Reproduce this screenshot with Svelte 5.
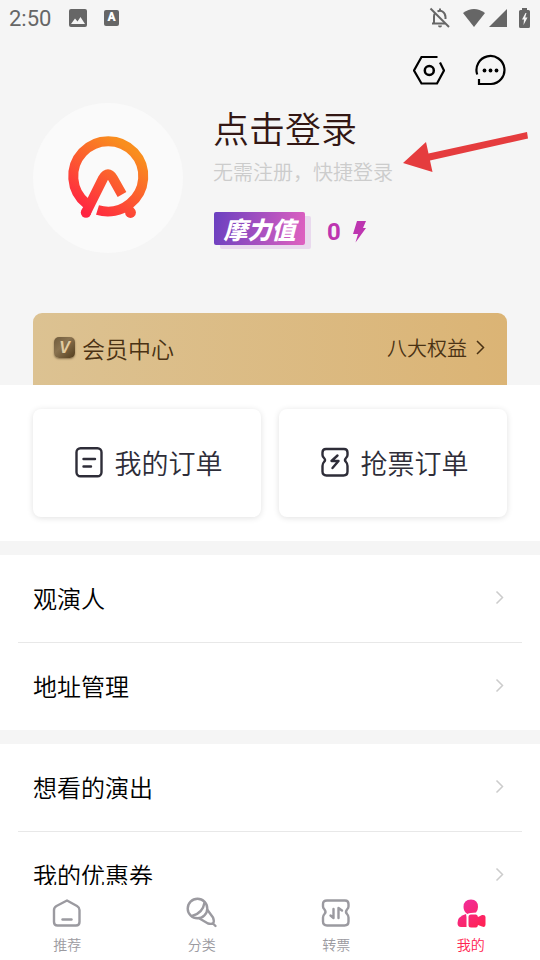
<script>
  const orders = [
    { label: '我的订单', icon: 'list' },
    { label: '抢票订单', icon: 'grab' }
  ];

  const groups = [
    ['观演人', '地址管理'],
    ['想看的演出', '我的优惠券']
  ];

  const tabs = [
    { label: '推荐', icon: 'home' },
    { label: '分类', icon: 'mic' },
    { label: '转票', icon: 'ticket' },
    { label: '我的', icon: 'user' }
  ];

  let active = $state('user');
</script>

<div class="screen">
  <main>
    <section class="hero">
      <div class="status">
        <span class="time">2:50</span>
        <svg class="photo" width="18" height="18" viewBox="0 0 18 18">
          <rect width="18" height="18" rx="2" fill="#666" />
          <path d="M2 15L6 9.500L8.500 12.500L11.500 8L16 15Z" fill="#f5f5f5" />
        </svg>
        <span class="letter">A</span>
        <span class="spacer"></span>
        <svg width="22" height="22" viewBox="0 0 22 22" fill="none" stroke="#666" stroke-width="2">
          <path d="M5 16V9.500Q5 7.500 6 6.500M8.500 4.500Q11 3 13.500 4.500Q16.500 6.500 16.500 10V12M3 16.500H16M11 1.500V4" />
          <path d="M9 18.500H13Q13 20.500 11 20.500Q9 20.500 9 18.500Z" fill="#666" stroke="none" />
          <path d="M1.500 1.500L20 20" />
        </svg>
        <svg class="wifi" width="22" height="18" viewBox="0 0 22 18">
          <path d="M0 4Q11 -4 22 4L11 18Z" fill="#666" />
        </svg>
        <svg class="signal" width="18" height="18" viewBox="0 0 18 18">
          <path d="M18 0V18H0Z" fill="#666" />
        </svg>
        <svg width="11" height="20" viewBox="0 0 11 20">
          <path d="M3 2V0H8V2H9.500Q11 2 11 3.500V18.500Q11 20 9.500 20H1.500Q0 20 0 18.500V3.500Q0 2 1.500 2Z" fill="#666" />
          <path d="M6.500 5L3 11.500H5L4.500 17L8.500 9.500H6.200L7.500 5Z" fill="#f5f5f5" />
        </svg>
      </div>

      <div class="actions">
        <button aria-label="设置">
          <svg width="32" height="32" viewBox="0 0 32 32" fill="none" stroke="#000" stroke-width="2.200">
            <path d="M24.500 3H8.500L1 16.500L8.500 29.500H24L31 16.500L27 8.500" />
            <circle cx="16.300" cy="16.500" r="4.500" stroke-width="2.500" />
          </svg>
        </button>
        <button aria-label="消息">
          <svg width="32" height="32" viewBox="0 0 32 32" fill="none" stroke="#000" stroke-width="2.200">
            <path d="M3.200 20.500A14 14 0 1 1 17 30H5V25" />
            <circle cx="10.500" cy="16.500" r="1.900" fill="#000" stroke="none" />
            <circle cx="16.500" cy="16.500" r="1.900" fill="#000" stroke="none" />
            <circle cx="22.500" cy="16.500" r="1.900" fill="#000" stroke="none" />
          </svg>
        </button>
      </div>

      <div class="profile">
        <div class="avatar">
          <svg width="84" height="84" viewBox="0 0 84 84" fill="none" stroke="url(#flame)" stroke-width="10">
            <defs>
              <linearGradient id="flame" gradientUnits="userSpaceOnUse" x1="20" y1="78" x2="66" y2="14">
                <stop offset="0" stop-color="#ff2442" />
                <stop offset="1" stop-color="#f98e1e" />
              </linearGradient>
            </defs>
            <path d="M20.500 67.600A35 35 0 1 1 64 67.600A35 35 0 0 1 31.500 74" />
            <path d="M20 76.500L37 42.500Q42 34 47 42.500L56 58.500" />
            <circle cx="20" cy="76.500" r="5.200" fill="url(#flame)" stroke="none" />
            <circle cx="64.500" cy="76.500" r="5.400" fill="url(#flame)" stroke="none" />
            <path d="M64.500 76L61 69" stroke-width="9" />
          </svg>
        </div>
        <div class="info">
          <a class="login" href="#login">点击登录</a>
          <p class="hint">无需注册，快捷登录</p>
          <div class="points">
            <span class="badge">摩力值</span>
            <span class="count">0</span>
            <svg width="14" height="22" viewBox="0 0 14 22">
              <path d="M4 0H13L10 7H13L2.500 21.500L5 13H0Z" fill="#bd35b0" />
            </svg>
          </div>
        </div>
        <svg class="arrow" width="126" height="42" viewBox="0 0 126 42">
          <path d="M0 31L23 10L25.500 21.500L124 0L125 6.500L27 28.500L29.500 40Z" fill="#e53c3e" />
        </svg>
      </div>

      <a class="member" href="#member">
        <span class="vip">V</span>
        <span class="member-name">会员中心</span>
        <span class="member-more">八大权益</span>
        <svg width="9" height="15" viewBox="0 0 9 15" fill="none" stroke="#4a3214" stroke-width="1.500">
          <path d="M1 1L7.500 7.500L1 14" />
        </svg>
      </a>
    </section>

    <section class="orders">
      {#each orders as order}
        <button class="order">
          <svg width="28" height="32" viewBox="1 0 28 32" fill="none" stroke="#2e2d38" stroke-width="2.400" stroke-linecap="round" stroke-linejoin="round">
            {#if order.icon === 'list'}
              <rect x="2.500" y="2.200" width="25" height="28" rx="4" />
              <path d="M9.500 13H21M9.500 20.500H17" />
            {:else}
              <path d="M6 3H24Q27.500 3 27.500 6.500V9Q27.500 10.500 26 12Q24 14 26 16Q27.500 17.500 27.500 20V25.500Q27.500 29.500 23.500 29.500H6.500Q2.500 29.500 2.500 25.500V20Q2.500 17.500 4 16Q6 14 4 12Q2.500 10.500 2.500 9V6.500Q2.500 3 6 3Z" />
              <path d="M17.500 9.500L11.500 15H18.500L12.500 22" />
            {/if}
          </svg>
          {order.label}
        </button>
      {/each}
    </section>

    {#each groups as group}
      <ul class="group">
        {#each group as item}
          <li>
            <a href="#{item}">
              {item}
              <svg width="9" height="15" viewBox="0 0 9 15" fill="none" stroke="#ccc" stroke-width="1.500">
                <path d="M1.500 1.500L7.500 7.500L1.500 13.500" />
              </svg>
            </a>
          </li>
        {/each}
      </ul>
    {/each}
  </main>

  <nav>
    {#each tabs as tab}
      <button class="tab" class:active={active === tab.icon} onclick={() => active = tab.icon}>
        <svg width="32" height="32" viewBox="0 0 32 32" fill="none" stroke="currentColor" stroke-width="2.400" stroke-linecap="round" stroke-linejoin="round">
          {#if tab.icon === 'home'}
            <path d="M16 3.500L26 9Q28.500 10.500 28.500 13V25Q28.500 28.500 25 28.500H6.500Q3 28.500 3 25V13Q3 10.500 5.500 9Z" />
            <path d="M11.500 22.500H20.500" />
          {:else if tab.icon === 'mic'}
            <circle cx="11.500" cy="11.500" r="9.800" />
            <path d="M18.500 5.500Q17 16 6 19M21.500 13L27 20.500Q30 28.500 22 26.500L13.500 21.500M27 26.500L29.500 29" />
          {:else if tab.icon === 'ticket'}
            <path d="M7 3.500H25Q28.500 3.500 28.500 7V9.500Q28.500 11 27 12.500Q25 15 27 17Q28.500 18.500 28.500 20.500V24.500Q28.500 28.500 24.500 28.500H7Q3 28.500 3 24.500V20.500Q3 18.500 4.500 17Q6.500 15 4.500 12.500Q3 11 3 9.500V7Q3 3.500 7 3.500Z" />
            <path d="M13.500 12V21L10.500 18.500M18.500 21V11L22 13.500" />
          {:else}
            <defs>
              <linearGradient id="pink" gradientUnits="userSpaceOnUse" x1="9" y1="3" x2="26" y2="28">
                <stop offset="0" stop-color="#f12c9a" />
                <stop offset="1" stop-color="#ff2256" />
              </linearGradient>
            </defs>
            <g fill="url(#pink)" stroke="none">
              <path d="M8.500 10Q8.500 2.500 16 2.500Q23 2.500 23 10Q23 13 21 15.500Q15 15.500 12.500 17Q8.500 14.500 8.500 10Z" />
              <path d="M11 17Q2.500 19.500 2.500 26Q2.500 30 6 30H11.500V20Z" />
              <path d="M16 17.500H21Q22.500 17.500 23 20L27 18Q30.500 17.500 30.500 20V27.500Q30.500 31 27 29.500L23 28Q22.500 30.500 21 30.500H16Q13.500 30.500 13.500 28V20Q13.500 17.500 16 17.500Z" />
            </g>
          {/if}
        </svg>
        <span>{tab.label}</span>
      </button>
    {/each}
  </nav>
</div>

<style>
  :global(body) {
    margin: 0;
  }

  .screen {
    height: 100vh;
    display: flex;
    flex-direction: column;
    background: #fff;
    font-family: "Noto Sans CJK SC", sans-serif;
    font-weight: 350;
  }

  main {
    flex: 1;
    min-height: 0;
    overflow: hidden;
  }

  button {
    padding: 0;
    border: 0;
    background: none;
    font: inherit;
    cursor: pointer;
  }

  a {
    color: inherit;
    text-decoration: none;
  }

  svg {
    display: block;
    flex-shrink: 0;
  }

  .hero {
    padding: 0 33px;
    background: #f5f5f5;
  }

  .status {
    display: flex;
    align-items: center;
    height: 36px;
    margin: 0 -24px;
    padding-right: 1px;
    font-family: Roboto, sans-serif;
  }

  .time {
    width: 60px;
    font-size: 22px;
    font-weight: 400;
    color: #666;
  }

  .letter {
    width: 15px;
    height: 16px;
    margin-left: 17px;
    border-radius: 2px;
    background: #666;
    color: #fff;
    font-size: 12px;
    font-weight: 900;
    line-height: 15px;
    text-align: center;
  }

  .spacer {
    flex: 1;
  }

  .wifi {
    margin-left: 12px;
  }

  .signal {
    margin: 0 12px 0 4px;
  }

  .actions {
    display: flex;
    justify-content: flex-end;
    gap: 29px;
    margin-top: 18px;
    padding-right: 1px;
  }

  .profile {
    position: relative;
    display: flex;
    gap: 30px;
    margin-top: 17px;
  }

  .avatar {
    display: flex;
    align-items: center;
    justify-content: center;
    width: 150px;
    height: 150px;
    border-radius: 50%;
    background: #fafafa;
  }

  .login {
    display: block;
    font-size: 36px;
    line-height: 48px;
    color: #331714;
  }

  .hint {
    margin: 6px 0 0;
    font-size: 20px;
    line-height: 30px;
    color: #ccc;
  }

  .points {
    display: flex;
    align-items: center;
    gap: 18px;
    margin-top: 24px;
  }

  .badge {
    width: 91px;
    margin-left: 1px;
    border-radius: 2px;
    background: linear-gradient(100deg, #6a40c0, #e060c0);
    box-shadow: 6px 4px 0 #e9d9ee;
    color: #fff;
    font-size: 24px;
    font-style: italic;
    font-weight: 900;
    line-height: 33px;
    text-align: center;
  }

  .count {
    margin: 8px -6px 0 4px;
    font-family: Roboto, sans-serif;
    font-size: 24px;
    font-weight: 700;
    line-height: 26px;
    color: #bd35b0;
  }

  .points svg {
    margin-top: 8px;
  }

  .arrow {
    position: absolute;
    top: 29px;
    right: -22px;
  }

  .member {
    display: flex;
    align-items: center;
    height: 72px;
    margin-top: 60px;
    padding: 0 22px 3px 21px;
    box-sizing: border-box;
    border-radius: 9px 9px 0 0;
    background: linear-gradient(90deg, #dcc292, #dbb475);
    color: #4a3214;
  }

  .vip {
    width: 21px;
    height: 21px;
    border-radius: 5px;
    background: linear-gradient(135deg, #6f5a3c, #8a7350 40%, #523c1c);
    box-shadow: 0 1px 2px #8a7350;
    color: #e2cba0;
    font-family: "Liberation Sans", sans-serif;
    font-size: 16px;
    font-style: italic;
    font-weight: 700;
    line-height: 21px;
    text-align: center;
  }

  .member-name {
    flex: 1;
    margin-left: 7px;
    font-size: 23px;
  }

  .member-more {
    margin-right: 9px;
    font-size: 20px;
  }

  .orders {
    display: flex;
    gap: 18px;
    padding: 24px 33px;
  }

  .order {
    flex: 1;
    display: flex;
    align-items: center;
    justify-content: center;
    gap: 12px;
    height: 108px;
    padding: 0 0 2px 3px;
    border-radius: 8px;
    background: #fff;
    box-shadow: 0 1px 6px rgba(0, 0, 0, 0.12);
    color: #2e2d38;
    font-size: 27px;
  }

  .group {
    margin: 0;
    padding: 0 18px;
    border-top: 14px solid #f5f5f5;
    list-style: none;
  }

  li + li {
    border-top: 1px solid #e8e8e8;
  }

  li a {
    display: flex;
    align-items: center;
    justify-content: space-between;
    height: 87px;
    padding: 0 18px 2px 15px;
    box-sizing: border-box;
    font-size: 24px;
    color: #000;
  }

  nav {
    display: flex;
    height: 75px;
    padding-right: 2px;
    background: #fff;
  }

  .tab {
    flex: 1;
    display: flex;
    flex-direction: column;
    align-items: center;
    padding-top: 12px;
    color: #9b9aa0;
    font-size: 14px;
    line-height: 20px;
  }

  .tab span {
    margin-top: 5px;
  }

  .active {
    color: #ff2350;
  }
</style>
